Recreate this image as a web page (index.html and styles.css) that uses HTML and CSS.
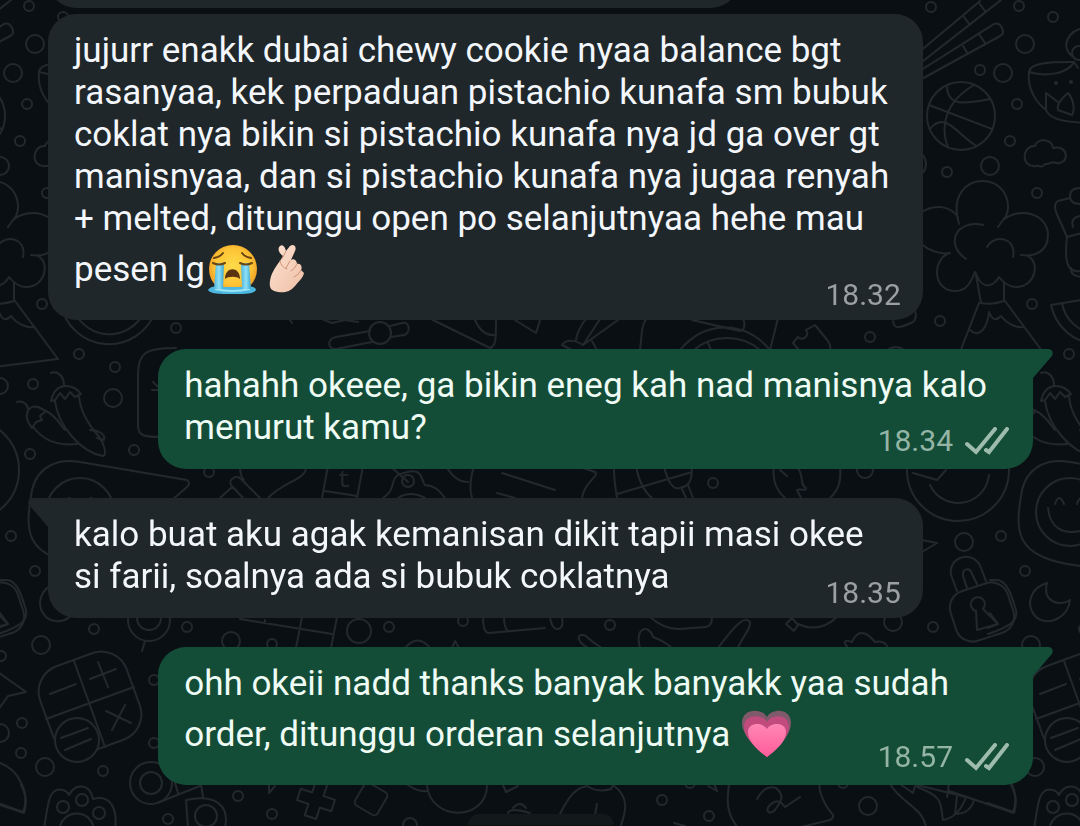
FILE: index.html
```
<!DOCTYPE html>
<html lang="id">
  <head>
    <meta charset="UTF-8" />
    <meta name="viewport" content="width=device-width, initial-scale=1.0" />
    <title>Chat</title>
    <link rel="stylesheet" href="styles.css">
  </head>
  <body>
    <!-- doodle wallpaper, repeats every 990px -->
    <svg class="wallpaper" aria-hidden="true">
      <defs>
        <pattern id="wall" width="990" height="826" patternUnits="userSpaceOnUse">
          <g id="doodles" class="doodles">
            <!-- bubbles -->
            <g>
              <circle cx="931" cy="7" r="5" /><circle cx="1019" cy="6" r="5" /><circle cx="1053" cy="17" r="5" />
              <circle cx="980" cy="70" r="5" /><circle cx="1017" cy="104" r="5" /><circle cx="1010" cy="141" r="5" />
              <circle cx="947" cy="172" r="5" /><circle cx="1037" cy="193" r="5" /><circle cx="1032" cy="304" r="5" />
              <circle cx="940" cy="321" r="5" /><circle cx="1025" cy="44" r="9" /><circle cx="1003" cy="73" r="9" />
              <circle cx="990" cy="166" r="9" /><circle cx="79" cy="354" r="5" /><circle cx="115" cy="367" r="5" />
              <circle cx="33" cy="384" r="5" /><circle cx="30" cy="454" r="5" /><circle cx="134" cy="450" r="5" />
              <circle cx="176" cy="328" r="5" /><circle cx="209" cy="472" r="5" /><circle cx="113" cy="398" r="9" />
              <circle cx="0" cy="386" r="8" /><circle cx="11" cy="536" r="5" /><circle cx="35" cy="571" r="5" />
              <circle cx="713" cy="483" r="5" /><circle cx="865" cy="470" r="8" /><circle cx="870" cy="337" r="5" />
              <circle cx="964" cy="542" r="9" /><circle cx="933" cy="627" r="5" /><circle cx="893" cy="622" r="9" />
              <circle cx="41" cy="645" r="9" /><circle cx="94" cy="629" r="5" /><circle cx="1" cy="656" r="5" />
              <circle cx="187" cy="627" r="5" /><circle cx="231" cy="641" r="9" /><circle cx="272" cy="644" r="5" />
              <circle cx="359" cy="631" r="12" /><circle cx="389" cy="627" r="5" /><circle cx="463" cy="621" r="5" />
              <circle cx="610" cy="625" r="5" /><circle cx="22" cy="723" r="5" /><circle cx="0" cy="733" r="9" />
              <circle cx="21" cy="753" r="5" /><circle cx="45" cy="767" r="9" /><circle cx="103" cy="771" r="5" />
              <circle cx="154" cy="680" r="5" /><circle cx="154" cy="743" r="5" /><circle cx="238" cy="796" r="5" />
              <circle cx="168" cy="819" r="5" /><circle cx="272" cy="814" r="5" /><circle cx="410" cy="825" r="7" />
              <circle cx="662" cy="800" r="5" /><circle cx="709" cy="816" r="5" /><circle cx="690" cy="783" r="5" />
              <circle cx="843" cy="783" r="5" /><circle cx="868" cy="806" r="9" />
            </g>
            <!-- chopsticks, basketball, lotus bowl, cloud -->
            <path d="M918 53 980 1M918 65 1001 0M964 17l6 8M979 3l6 8M918 72 994 24Q999 22 1002 28T1000 36L918 81M963 46l5 8M979 34l6 9" />
            <circle cx="961" cy="116" r="34" />
            <path d="M929 105 992 129M947 87C948 108 968 103 990 99M974 85C935 108 945 140 948 147M930 129C945 110 958 135 975 145" />
            <path d="M1029 72C1030 61 1058 62 1074 62C1068 74 1045 77 1029 72C1027 90 1037 103 1046 110V93L1058 102M1058 110C1056 104 1064 96 1068 93C1074 100 1075 110 1072 115M1046 110C1050 121 1070 123 1100 123M1058 110 1072 115M1074 62 1078 68M1072 56C1060 46 1068 30 1085 28M1118 72C1118 90 1112 103 1100 110" />
            <circle cx="1079" cy="53" r="7" />
            <circle cx="1056" cy="83" r="1" /><circle cx="1071" cy="82" r="1" />
            <path d="M1035 146C1037 138 1052 138 1053 148C1069 144 1070 165 1056 163C1052 160 1050 165 1045 164C1042 169 1040 165 1036 166C1020 168 1022 145 1035 146Z" />
            <path d="M922 154Q930 164 922 174" />
            <!-- tree -->
            <path d="M959 224C950 194 968 181 982 181C1007 181 1014 209 1003 220L998 227M1003 220C1020 206 1048 214 1048 235C1048 252 1034 257 1021 255M1028 256C1040 262 1036 287 1016 287C1008 287 1003 282 999 277C993 287 985 288 979 280L975 272C968 290 962 291 954 291C932 290 932 258 950 253C940 255 928 250 920 243M958 217C950 206 935 203 920 213M983 225C955 219 945 245 966 259M987 247C995 233 1017 238 1013 257" />
            <path d="M976 275 981 303Q992 305 1004 301L1004 283M979 303 960 352M1005 301 1048 359 960 370M970 330C980 340 988 325 989 312C993 322 997 320 1001 316C1008 325 1018 328 1023 327" />
            <!-- ice cream, melon -->
            <path d="M1070 198 1058 201Q1053 204 1056 212L1067 237Q1064 262 1070 268C1074 272 1080 272 1086 270M1067 237 1082 233M1080 188Q1070 188 1070 196T1080 204M1080 216Q1070 218 1073 227M1071 268Q1070 276 1082 277" />
            <path d="M1141 290 1051 305A49 49 0 0 0 1145 312M1062 303A38 38 0 0 0 1134 312" />
            <!-- chillies -->
            <path d="M51 373C59 370 64 378 64 385M51 401C53 392 58 386 66 386C74 386 78 390 81 394L75 397 70 392 65 399 60 393 55 400ZM55 401C58 425 80 452 103 456C108 454 103 440 95 432C82 415 80 405 79 397" />
            <path d="M17 402C23 400 28 405 28 409M32 428C22 416 28 404 38 407L46 411 40 416 42 420 36 422ZM34 428C45 442 60 446 77 444M46 411C55 415 60 424 65 430M90 430C98 430 106 434 104 440L97 438" />
            <path d="M176 348C145 348 138 353 138 375V425C138 435 142 437 160 437M153 382l5 5M158 390h-6" />
            <!-- sunflower smiley and neighbours -->
            <circle cx="958" cy="470" r="51" />
            <path d="M930 485A31 31 0 0 0 989 475M913 473 937 480 946 470" />
            <path d="M90 566C22 558 25 530 32 490C38 465 60 458 80 462L187 480Q191 483 187 487L172 500" />
            <circle cx="80" cy="512" r="34" />
            <path d="M58 508C60 530 75 534 90 531Q100 526 102 512M65 504Q69 492 74 504M87 504Q91 492 96 504" />
            <path d="M0 580H8C18 582 22 597 26 610C28 620 22 626 -2 634M0 613 8 624-2 628" />
            <!-- pen, cards, flower -->
            <path d="M260 498 241 479C236 474 228 480 231 485L243 498M220 498 232 487M240 465Q240 477 244 480M306 465C308 480 285 480 268 498M328 466 322 498M363 466 357 498M325 491 357 496" />
            <text class="doodle-letter" x="337" y="487">t</text>
            <circle cx="408" cy="481" r="6" />
            <path d="M390 466 408 482M383 498C396 490 390 480 398 475C425 464 420 480 425 485C437 486 440 492 445 498M398 498Q410 490 425 498M446 466Q455 482 468 482M474 466Q468 485 472 498M502 473 555 490M497 493 515 498" />
            <path d="M583 468 595 472C600 476 584 482 582 498M614 470Q614 480 617 498M617 494 692 472M636 466Q640 488 652 498M664 466C668 484 674 490 680 488C690 486 692 480 692 466M682 489 686 498M688 485 693 498M774 466C772 480 776 490 785 498M840 466C842 485 836 492 830 498M797 466C805 478 799 484 806 488C806 492 800 488 797 490L801 498M780 470 787 476" />
            <!-- watch, bouquet, plate, puzzle piece -->
            <circle cx="380" cy="333" r="11" />
            <path d="M370 331 336 337C326 339 328 350 336 349L372 342M390 326 402 323C410 321 411 333 404 335L391 337M324 320 332 323 345 320 358 322M433 320 490 348C496 346 496 340 496 318M475 320Q482 336 495 335M515 320 536 333 540 320M290 320l2 3" />
            <path d="M562 345 574 351M562 345C566 339 575 340 583 345L618 320M588 316Q577 330 576 340M602 316 583 345M592 341 597 350M640 350C642 335 641 325 647 318M692 320 740 331C746 330 745 321 742 318M680 350C705 320 745 320 770 350M694 350C712 334 742 334 760 350M708 343 711 350M770 350 778 318M799 350 793 343 798 337C802 342 810 336 806 330L815 325 828 341Q832 347 829 352M893 321C894 330 900 328 913 322Q918 318 914 308M887 350Q896 344 904 350" />
            <!-- padlock, moon -->
            <rect x="952" y="586" width="60" height="52" rx="17" transform="rotate(-18 982 612)" />
            <path d="M957 591 951 575C948 555 975 550 981 568L986 581M967 588 963 576C962 568 970 567 972 574L977 584M976 611A7 7 0 1 1 983 609L998 624 977 630ZM1047 583C1030 588 1025 605 1036 617C1048 627 1068 618 1070 600C1060 607 1042 602 1047 583ZM922 540 937 543 922 552" />
            <circle cx="149" cy="620" r="21" /><circle cx="149" cy="618" r="12" />
            <path d="M145 641 142 651M240 619 332 634M302 617 296 648M337 617 331 648M265 620V623M405 648Q418 633 430 648M452 648 455 641 459 648M483 617Q483 633 489 633L545 628M504 617Q504 628 508 631M550 617Q552 630 558 629T562 617" />
            <path d="M650 617Q665 630 680 629L705 627Q712 627 712 617M718 648C735 625 745 615 750 622C752 628 740 640 738 648M588 648C574 640 578 632 586 636Q592 642 602 648M640 648C634 625 650 625 653 637Q664 641 672 648M786 624 792 618 798 625 794 631ZM798 624Q820 634 838 616M848 648Q840 638 852 642Q860 624 875 642Q885 640 888 648" />
            <!-- calculator -->
            <rect x="44" y="657" width="92" height="92" rx="27" transform="rotate(-20 90 703)" />
            <circle class="cover" cx="77" cy="740" r="22" />
            <path d="M74 661 105 747M46 719 134 687M50 694 76 684M98 662 108 687M90 679 116 669M106 711 131 723M125 705 112 730M61 738 88 728M65 750 91 739" />
            <path d="M-2 672 26 692 8 696-2 710M0 763C20 770 30 795 23 812L-2 803" />
            <!-- paw, headset -->
            <path d="M44 830C48 800 50 786 63 790Q67 791 69 795C75 783 90 783 93 799C110 794 118 808 115 830M59 830C62 808 92 808 94 830" />
            <circle cx="63" cy="807" r="6" /><circle cx="82" cy="800" r="6" /><circle cx="99" cy="813" r="6" />
            <circle cx="151" cy="783" r="21" /><circle cx="151" cy="783" r="11" />
            <path d="M157 803 200 786M175 783 178 793M201 784 203 797M188 828 186 800C215 794 230 805 225 828" />
            <circle cx="206" cy="816" r="11" />
            <!-- bottom row -->
            <path d="M269 785V793L275 786" />
            <path transform="translate(316 800) rotate(18)" d="M-6-18H6V-6H18V6H6V18H-6V6H-18V-6H-6Z" />
            <rect x="358" y="786" width="26" height="26" rx="4" transform="rotate(30 371 799)" />
            <path d="M408 785Q418 792 427 791M427 785C430 822 487 822 487 785M503 785 506 792 518 786M508 813Q510 807 530 813M513 808Q520 800 526 808M558 818C568 797 575 788 587 786Q598 793 611 789L613 785C630 797 626 812 620 828M597 804 595 815M708 786 717 791 714 784M729 784C726 805 728 815 738 828M819 784Q820 800 833 815Q834 818 830 820L797 828M757 799Q765 784 776 788C784 795 783 800 774 811C768 815 765 810 770 805Q778 797 785 807L800 797M674 823 685 826" />
            <path d="M890 784C902 804 924 808 926 828M900 784 913 793 915 786M917 787C945 797 940 805 943 820C955 818 962 808 966 797L917 785M949 784 947 797M949 791 1014 813C1018 800 1014 790 1011 785M957 796 955 814Q970 814 974 800" />
          </g>
          <use href="#doodles" x="990" />
          <use href="#doodles" x="-990" />
        </pattern>
      </defs>
      <rect width="100%" height="100%" fill="url(#wall)" />
    </svg>

    <main class="chat">
      <div class="bubble in bubble-cut"></div>

      <article class="bubble in">
        <p class="text">jujurr enakk dubai chewy cookie nyaa balance bgt rasanyaa, kek perpaduan pistachio kunafa sm bubuk coklat nya bikin si pistachio kunafa nya jd ga over gt manisnyaa, dan si pistachio kunafa nya jugaa renyah + melted, ditunggu open po selanjutnyaa hehe mau pesen lg<svg class="emoji" viewBox="0 0 50 50" role="img" aria-label="menangis">
            <defs>
              <radialGradient id="face" cx=".5" cy=".45" r=".55">
                <stop offset="0" stop-color="#ffdc4a" />
                <stop offset=".7" stop-color="#fcc335" />
                <stop offset="1" stop-color="#ee9a25" />
              </radialGradient>
              <linearGradient id="tear" x1="0" x2="1" y1="0" y2="0">
                <stop offset="0" stop-color="#4fb4dc" />
                <stop offset=".5" stop-color="#8fe0f5" />
                <stop offset="1" stop-color="#3aa5d2" />
              </linearGradient>
            </defs>
            <circle cx="26" cy="25" r="24" fill="url(#face)" />
            <path d="M1 46C3 42 9 42 13 43H38C43 42 48 42 49 46C47 50 39 50 26 50S3 50 1 46Z" fill="#4cb8e0" />
            <path d="M8 45Q25 49 43 45" fill="none" stroke="#9be4f7" stroke-width="2" />
            <path d="M9 19H17L16 45H7Z" fill="url(#tear)" />
            <path d="M34 19H42L44 45H35Z" fill="url(#tear)" />
            <path d="M7 14Q13 13 16 9M35 9Q38 13 44 14M6 19Q12 22 18 19M33 19Q39 22 45 19" fill="none" stroke="#6b4512" stroke-width="2" stroke-linecap="round" />
            <path d="M18 35C18 22 33 22 33 35C30 32 21 32 18 35Z" fill="#5a3410" />
          </svg><svg class="emoji" viewBox="0 0 50 50" role="img" aria-label="saranghae">
            <defs>
              <linearGradient id="skin" x1="0" x2="1" y1="0" y2="1">
                <stop offset="0" stop-color="#fde3d2" />
                <stop offset="1" stop-color="#efbfa6" />
              </linearGradient>
            </defs>
            <path d="M19 2C22 0 24 3 25 7L29 2C33-1 36 3 34 7L30 16C33 14 36 17 36 20C39 19 42 22 40 26L43 29C42 34 38 37 34 42C29 48 23 49 17 48C10 47 8 44 9 37C10 30 13 25 19 17L22 12C18 9 16 5 19 2Z" fill="url(#skin)" />
            <path d="M25 7 21 15M29 17 25 24M36 20Q34 25 30 27M40 26Q38 31 33 33M19 17Q20 23 26 25" fill="none" stroke="#cf9478" stroke-width="1" stroke-linecap="round" />
          </svg></p>
        <div class="meta"><time datetime="18:32">18.32</time></div>
      </article>

      <article class="bubble out">
        <svg class="tail" viewBox="0 0 20 30" aria-hidden="true"><path d="M0 0H15C20 0 21 5 18 8L0 29Z" /></svg>
        <p class="text">hahahh okeee, ga bikin eneg kah nad manisnya kalo menurut kamu?</p>
        <div class="meta">
          <time datetime="18:34">18.34</time>
          <svg class="ticks" viewBox="0 0 44 28" role="img" aria-label="terkirim"><path d="M2 17 11 25 30 2M21 23 24 25 42 2" /></svg>
        </div>
      </article>

      <article class="bubble in">
        <svg class="tail" viewBox="0 0 20 30" aria-hidden="true"><path d="M20 0H5C0 0-1 5 2 8L20 29Z" /></svg>
        <p class="text">kalo buat aku agak kemanisan dikit tapii masi okee si farii, soalnya ada si bubuk coklatnya</p>
        <div class="meta"><time datetime="18:35">18.35</time></div>
      </article>

      <article class="bubble out">
        <svg class="tail" viewBox="0 0 20 30" aria-hidden="true"><path d="M0 0H15C20 0 21 5 18 8L0 29Z" /></svg>
        <p class="text">ohh okeii nadd thanks banyak banyakk yaa sudah order, ditunggu orderan selanjutnya <svg class="emoji" viewBox="0 0 50 50" role="img" aria-label="hati">
            <defs>
              <linearGradient id="pink" x1="0" x2="0" y1="0" y2="1">
                <stop offset="0" stop-color="#ff86b4" />
                <stop offset="1" stop-color="#ff5c9a" />
              </linearGradient>
            </defs>
            <path d="M26 48C18 42 1 27 1 14C1-1 21-1 26 8C31-1 50-1 50 14C50 27 34 42 26 48Z" fill="#80596a" />
            <path d="M26 48C18 42 3 29 3 18C3 4 22 5 26 13C30 5 48 4 48 18C48 29 34 42 26 48Z" fill="#c04b7c" />
            <path d="M26 48C18 42 7 33 7 23C7 13 22 13 26 20C30 13 45 13 45 23C45 33 34 42 26 48Z" fill="url(#pink)" />
          </svg></p>
        <div class="meta">
          <time datetime="18:57">18.57</time>
          <svg class="ticks" viewBox="0 0 44 28" role="img" aria-label="terkirim"><path d="M2 17 11 25 30 2M21 23 24 25 42 2" /></svg>
        </div>
      </article>

      <div class="chip"></div>
    </main>
  </body>
</html>
```
FILE: styles.css
```
* {
  margin: 0;
  padding: 0;
  box-sizing: border-box;
}

body {
  font-family: Roboto, "Noto Sans", sans-serif;
  background: #0a0f13;
  color: #f3f6fb;
}

/* wallpaper lies behind the messages */
.wallpaper {
  position: fixed;
  inset: 0;
  width: 100%;
  height: 100%;
  z-index: -1;
}

.doodles {
  fill: none;
  stroke: #22282c;
  stroke-width: 2;
  stroke-linecap: round;
  stroke-linejoin: round;
}

.cover {
  fill: #0a0f13;
}

.doodle-letter {
  font-family: "Liberation Mono", monospace;
  font-size: 24px;
  fill: #22282c;
  stroke: none;
}

.chat {
  display: flex;
  flex-direction: column;
  gap: 29px;
  padding: 0 47px 0 48px;
  overflow: clip;
}

.bubble {
  position: relative;
  display: flex;
  flex-direction: column;
  width: 81vw;
  padding: 16px 24px 12px 26px;
  border-radius: 28px;
}

.in {
  align-self: flex-start;
  background: #1f272a;
  padding-right: 22px;
  padding-bottom: 9px;
}

.out {
  align-self: flex-end;
  background: #144d37;
  color: #effbf5;
}

/* end of the message above the visible part */
.bubble-cut {
  width: 64vw;
  height: 60px;
  padding: 0;
  margin-top: -52px;
  margin-bottom: -23px;
}

.text {
  font-size: 35px;
  line-height: 42px;
}

.in .text {
  padding-right: 6px;
}

.emoji {
  width: 50px;
  height: 50px;
  margin: 4px 2px 6px;
  vertical-align: -19px;
}

.meta {
  display: flex;
  align-items: center;
  align-self: flex-end;
  gap: 12px;
  margin-top: -24px;
  font-size: 30px;
  line-height: 32px;
  color: #9ba0a3;
}

.in .meta {
  margin-top: -21px;
}

.out .meta {
  color: #94b5a6;
}

.ticks {
  width: 44px;
  height: 28px;
  fill: none;
  stroke: #9dbcae;
  stroke-width: 4;
  stroke-linecap: round;
}

.tail {
  position: absolute;
  top: 0;
  width: 20px;
  height: 30px;
}

.out .tail {
  left: 100%;
  fill: #144d37;
}

.in .tail {
  right: 100%;
  fill: #1f272a;
}

.out:has(.tail) {
  border-top-right-radius: 0;
}

.in:has(.tail) {
  border-top-left-radius: 0;
}

.chip {
  align-self: center;
  width: 146px;
  height: 11px;
  border-radius: 12px 12px 0 0;
  background: #13181b;
}
```
